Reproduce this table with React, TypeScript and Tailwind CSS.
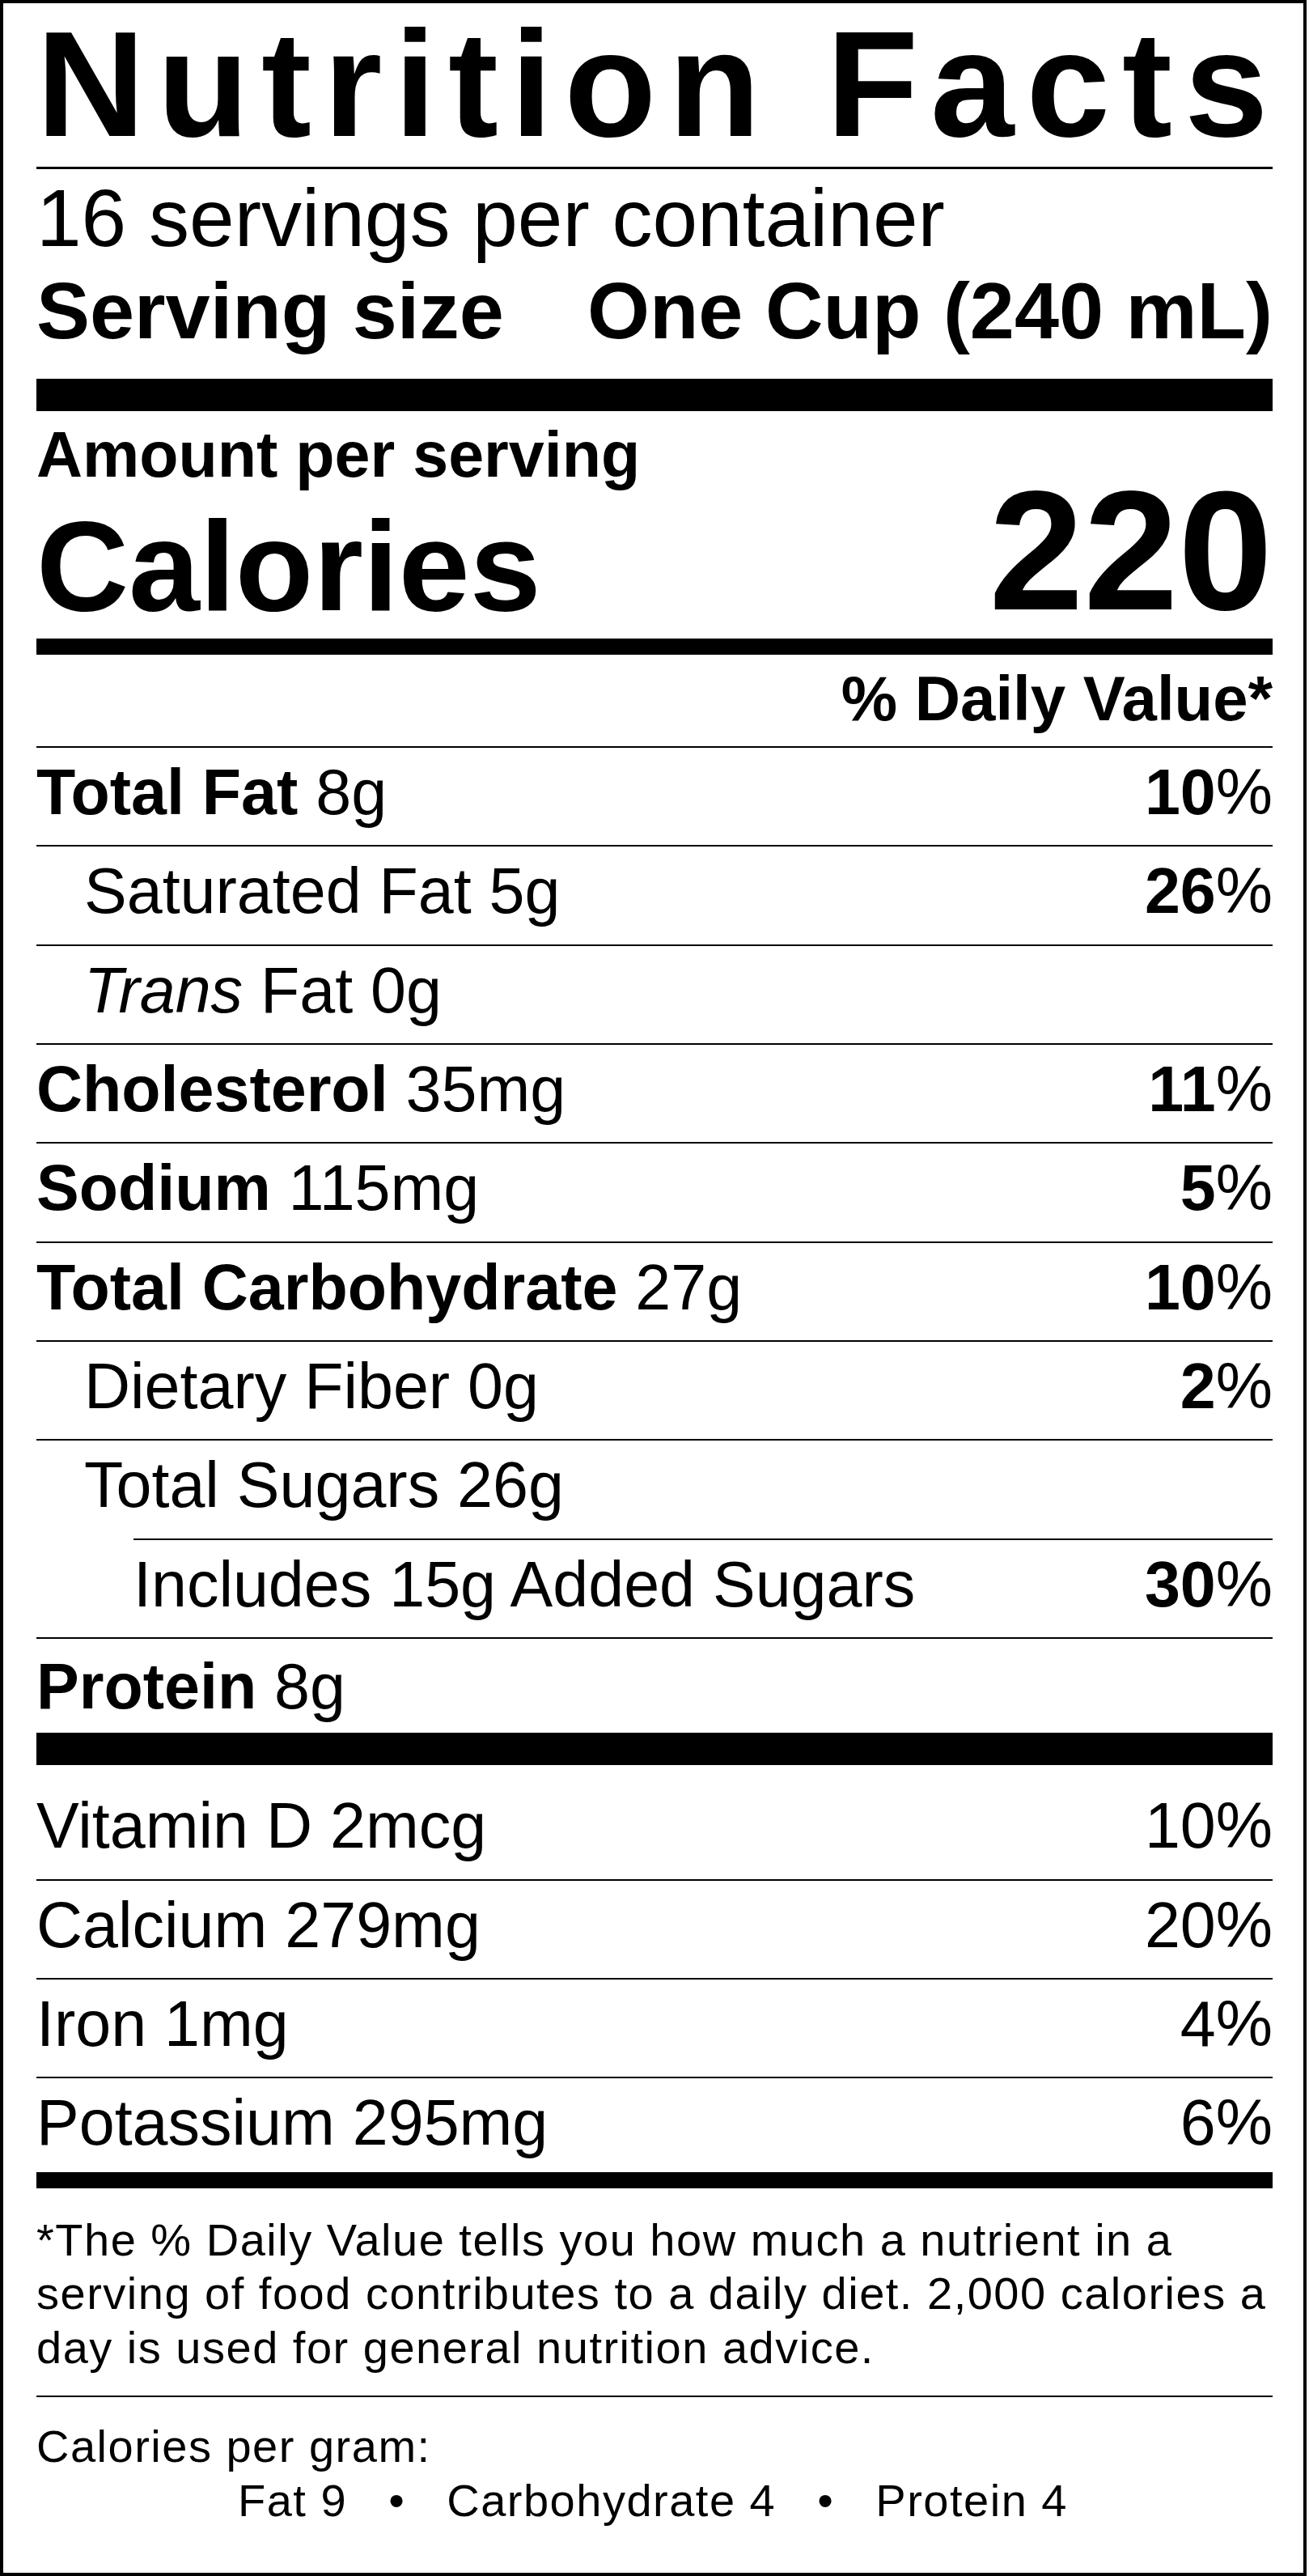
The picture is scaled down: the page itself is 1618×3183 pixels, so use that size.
import type { ReactNode } from "react";

function Row({
  left,
  dv,
  h = "h-[122.33px]",
  pt = "pt-[15px]",
  line = true,
  className = "",
}: {
  left: ReactNode;
  dv?: ReactNode;
  h?: string;
  pt?: string;
  line?: boolean;
  className?: string;
}) {
  return (
    <div
      className={`flex justify-between text-[79px] leading-none whitespace-nowrap ${h} ${pt} ${
        line ? "border-t-2 border-black" : ""
      } ${className}`}
    >
      <span>{left}</span>
      {dv && <span>{dv}</span>}
    </div>
  );
}

export default function App() {
  return (
    <div className="bg-white">
      <div className="w-[1615px] h-[3183px] border-4 border-black pl-[41px] pr-[38px] pt-[7px] text-black font-['Liberation_Sans',Arial,sans-serif]">
        {/* HEADER */}
        <h1 className="text-[186px] font-bold leading-none tracking-[15px] whitespace-nowrap">
          Nutrition Facts
        </h1>
        <div className="mt-[9px] h-[3px] bg-black" />
        <p className="mt-[10px] text-[100px] leading-none whitespace-nowrap">
          16 servings per container
        </p>
        <div className="mt-[15px] flex justify-between text-[99px] font-bold leading-none whitespace-nowrap">
          <span>Serving size</span>
          <span>One Cup (240 mL)</span>
        </div>
        <div className="mt-[35px] h-[40px] bg-black" />

        {/* CALORIES */}
        <div className="flex justify-between items-end">
          <div>
            <p className="mt-[14px] text-[79px] font-bold leading-none whitespace-nowrap">
              Amount per serving
            </p>
            <p className="mt-[19px] text-[158px] font-bold leading-none">Calories</p>
          </div>
          <span className="text-[210px] font-bold leading-[194px]">220</span>
        </div>
        <div className="mt-[11px] h-[20px] bg-black" />

        <p className="mt-[15px] text-right text-[78px] font-bold leading-none">% Daily Value*</p>

        {/* NUTRIENTS */}
        <div className="mt-[20px]">
          <Row left={<><b>Total Fat</b> 8g</>} dv={<><b>10</b>%</>} />
          <Row left={<span className="pl-[59px]">Saturated Fat 5g</span>} dv={<><b>26</b>%</>} />
          <Row left={<span className="pl-[59px]"><i>Trans</i> Fat 0g</span>} />
          <Row left={<><b>Cholesterol</b> 35mg</>} dv={<><b>11</b>%</>} />
          <Row left={<><b>Sodium</b> 115mg</>} dv={<><b>5</b>%</>} />
          <Row left={<><b>Total Carbohydrate</b> 27g</>} dv={<><b>10</b>%</>} />
          <Row left={<span className="pl-[59px]">Dietary Fiber 0g</span>} dv={<><b>2</b>%</>} />
          <Row left={<span className="pl-[59px]">Total Sugars 26g</span>} />
          <Row left="Includes 15g Added Sugars" dv={<><b>30</b>%</>} className="ml-[120px]" />
          <Row left={<><b>Protein</b> 8g</>} h="h-[118px]" pt="pt-[19px]" />
        </div>
        <div className="h-[40px] bg-black" />

        {/* VITAMINS */}
        <Row left="Vitamin D 2mcg" dv="10%" line={false} h="h-[141px]" pt="pt-[35px]" />
        <Row left="Calcium 279mg" dv="20%" h="h-[122px]" />
        <Row left="Iron 1mg" dv="4%" h="h-[122px]" />
        <Row left="Potassium 295mg" dv="6%" h="h-[118px]" />
        <div className="h-[20px] bg-black" />

        {/* FOOTNOTE */}
        <p className="mt-[31px] text-[56px] leading-[66.5px] tracking-[1.5px] whitespace-nowrap">
          *The % Daily Value tells you how much a nutrient in a
          <br />
          serving of food contributes to a daily diet. 2,000 calories a
          <br />
          day is used for general nutrition advice.
        </p>
        <div className="mt-[26px] h-[2px] bg-black" />
        <p className="mt-[28px] text-[56px] leading-[66.5px] tracking-[1.5px] whitespace-nowrap">
          Calories per gram:
        </p>
        <div className="flex gap-[51px] pl-[249px] text-[56px] leading-[66.5px] tracking-[1.5px] whitespace-nowrap">
          <span>Fat 9</span>
          <span>•</span>
          <span>Carbohydrate 4</span>
          <span>•</span>
          <span>Protein 4</span>
        </div>
      </div>
    </div>
  );
}
